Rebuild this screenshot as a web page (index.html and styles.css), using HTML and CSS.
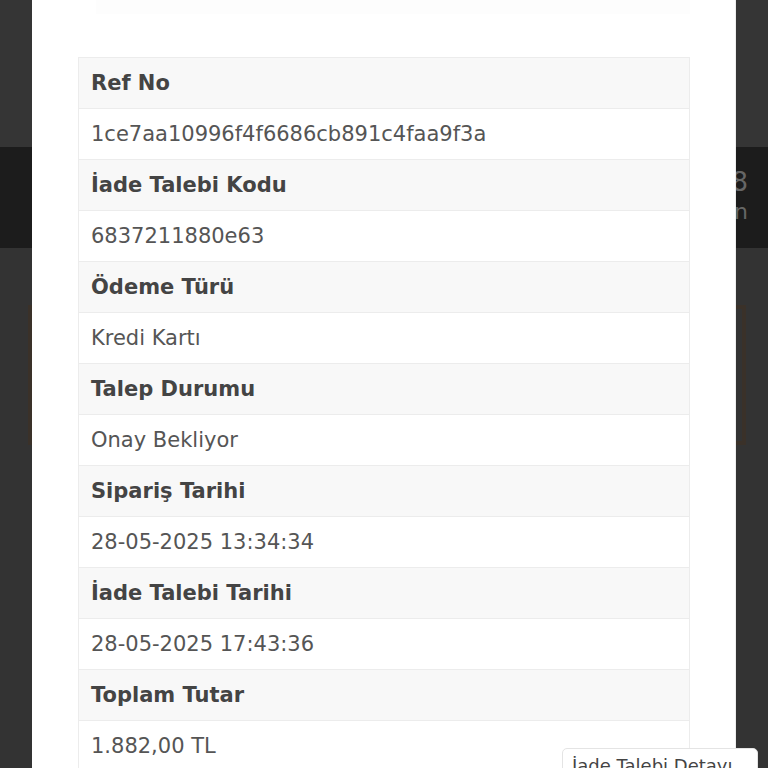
FILE: index.html
```html
<!DOCTYPE html>
<html lang="tr">
<head>
<meta charset="utf-8">
<title>İade Talebi Detayı</title>
<link rel="stylesheet" href="styles.css">
</head>
<body>
<div class="page">
  <div class="top"></div>
  <div class="band"><span class="band-num">8</span><span class="band-sub">n</span></div>
  <div class="content">
    <div class="card"></div>
  </div>
</div>
<div class="overlay">
  <div class="modal">
    <div class="modal-head"></div>
    <table class="details">
      <tr class="lbl"><th>Ref No</th></tr>
      <tr class="val"><td>1ce7aa10996f4f6686cb891c4faa9f3a</td></tr>
      <tr class="lbl"><th>İade Talebi Kodu</th></tr>
      <tr class="val"><td>6837211880e63</td></tr>
      <tr class="lbl"><th>Ödeme Türü</th></tr>
      <tr class="val"><td>Kredi Kartı</td></tr>
      <tr class="lbl"><th>Talep Durumu</th></tr>
      <tr class="val"><td>Onay Bekliyor</td></tr>
      <tr class="lbl"><th>Sipariş Tarihi</th></tr>
      <tr class="val"><td>28-05-2025 13:34:34</td></tr>
      <tr class="lbl"><th>İade Talebi Tarihi</th></tr>
      <tr class="val"><td>28-05-2025 17:43:36</td></tr>
      <tr class="lbl"><th>Toplam Tutar</th></tr>
      <tr class="val"><td>1.882,00 TL</td></tr>
    </table>
  </div>
</div>
<div class="tip">İade Talebi Detayı</div>
</body>
</html>
```
FILE: styles.css
```css
html, body {
  margin: 0;
  padding: 0;
  height: 100%;
  overflow: hidden;
}
body {
  background: #333333;
  font-family: "DejaVu Sans", sans-serif;
}
.page {
  display: flex;
  flex-direction: column;
}
.top {
  height: 147px;
  background: #353535;
}
.band {
  height: 101px;
  background: #1c1c1c;
  display: flex;
  flex-direction: column;
  align-items: flex-end;
  padding-right: 20px;
  box-sizing: border-box;
  padding-top: 20px;
  color: #666;
}
.band-num { font-size: 26px; line-height: 30px; }
.band-sub { font-size: 22px; line-height: 30px; }
.content {
  padding-top: 57px;
}
.card {
  height: 132px;
  margin: 0 22px 0 28px;
  border: 4px solid #3a3129;
  background: #333;
}
.overlay {
  position: fixed;
  inset: 0;
  display: flex;
  justify-content: center;
}
.modal {
  width: 704px;
  background: #ffffff;
  box-sizing: border-box;
  padding: 0 46px;
  height: 900px;
  box-shadow: inset -1px 0 0 #eeeeee;
}
.modal-head {
  height: 14px;
  margin: 0 0 43px 18px;
  background: #fdfdfd;
}
.details {
  width: 100%;
  border-collapse: collapse;
  font-size: 21px;
}
.details th, .details td {
  text-align: left;
  border: 1px solid #ececec;
  height: 51px;
  padding: 0 12px;
  box-sizing: border-box;
}
.details th {
  background: #f8f8f8;
  color: #444444;
  font-weight: bold;
}
.details td {
  background: #ffffff;
  color: #555555;
}
.tip {
  position: fixed;
  left: 562px;
  top: 748px;
  width: 196px;
  height: 40px;
  box-sizing: border-box;
  background: #fff;
  border: 1px solid #e4e4e4;
  border-radius: 5px;
  padding: 6px 9px;
  font-size: 18px;
  line-height: 22px;
  color: #444;
  white-space: nowrap;
}
```
